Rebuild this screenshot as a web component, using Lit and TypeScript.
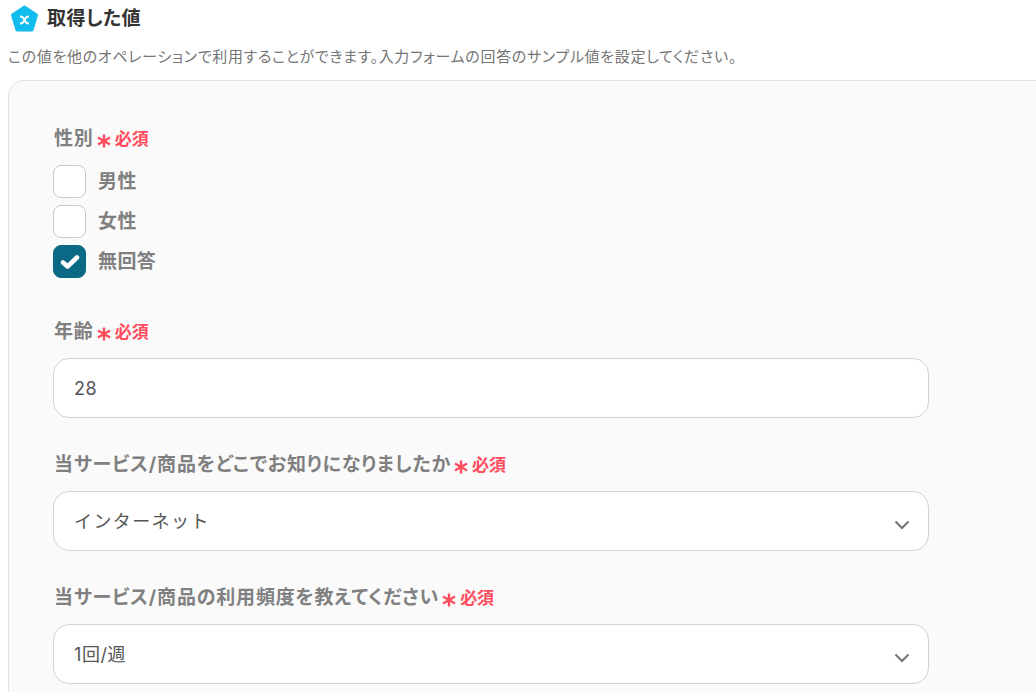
import { LitElement, html, css } from "lit";
import { customElement } from "lit/decorators.js";

const chevron = html`<svg class="chev" width="16" height="10" viewBox="0 0 16 10"><path d="M1.500 1.500 8 8l6.500-6.500" fill="none" stroke="#757575" stroke-width="2"/></svg>`;

@customElement("app-root")
export class AppRoot extends LitElement {
  static styles = css`
    :host {
      display: block;
      width: 1036px;
      height: 692px;
      overflow: hidden;
      background: #fff;
      font-family: Inter, "Noto Sans CJK JP", sans-serif;
      font-feature-settings: "palt";
      box-sizing: border-box;
      padding: 3px 0 0 8px;
    }
    .head { display: flex; align-items: center; gap: 8px; height: 30px; padding-left: 2px; }
    .logo { display: block; flex: none; }
    h1 { margin: 2px 0 0 1px; font-size: 19px; line-height: 28px; font-weight: 700; color: #333; letter-spacing: 0.4px; }
    .desc { margin: 12px 0 0; font-size: 15px; line-height: 24px; color: #757575; height: 24px; white-space: nowrap; letter-spacing: 0.68px; }
    .panel {
      margin-top: 11px;
      width: 1100px;
      height: 700px;
      box-sizing: border-box;
      background: #fafafa;
      border: 1px solid #dfe2e8;
      border-radius: 16px;
      padding: 44px 0 0 44px;
    }
    .label { display: flex; align-items: center; height: 28px; padding-left: 1px; font-size: 19px; line-height: 28px; font-weight: 700; color: #808080; letter-spacing: 0.82px; white-space: nowrap; }
    .star { display: block; margin: 4px 4px 0 3px; flex: none; }
    .req { font-size: 17px; color: #ff4d5e; font-weight: 700; letter-spacing: 0; }
    .opts { display: flex; flex-direction: column; gap: 7px; margin-top: 12px; }
    .opt { display: flex; align-items: center; gap: 12px; height: 33px; font-size: 19px; line-height: 28px; font-weight: 700; color: #808080; letter-spacing: 0.4px; }
    .box { width: 33px; height: 33px; box-sizing: border-box; border: 1px solid #c9c9c9; border-radius: 8px; background: #fff; display: flex; align-items: center; justify-content: center; }
    .box.on { background: #0a6a85; border-color: #0a6a85; }
    .field {
      margin-top: 12px;
      width: 876px;
      height: 60px;
      box-sizing: border-box;
      background: #fff;
      border: 1px solid #ced2da;
      border-radius: 16px;
      display: flex;
      align-items: center;
      justify-content: space-between;
      padding: 2px 18px 0 20px;
      font-size: 18px;
      line-height: 28px;
      color: #555;
      letter-spacing: 1.4px;
      font-feature-settings: normal;
    }
    .num { letter-spacing: 0.6px; }
    .g1 { margin-top: 40px; }
    .g2 { margin-top: 33px; }
    .chev { display: block; margin-top: 6px; }
  `;

  private label(text: string) {
    return html`<div class="label">${text}
      <svg class="star" width="14" height="14" viewBox="0 0 14 14">
        <path d="M7 0.500v13M1 3.500l12 7M13 3.500l-12 7" fill="none" stroke="#ff4d5e" stroke-width="2.400"/>
      </svg><span class="req">必須</span></div>`;
  }

  private opt(text: string, on = false) {
    return html`<div class="opt"><span class="box ${on ? "on" : ""}">${on
      ? html`<svg width="20" height="16" viewBox="0 0 20 16"><path d="M3 8.500 7.500 12.500 17 3.500" fill="none" stroke="#fff" stroke-width="4.500" stroke-linejoin="round" stroke-linecap="round"/></svg>`
      : ""}</span><span>${text}</span></div>`;
  }

  render() {
    return html`
      <div class="head">
        <svg class="logo" width="28" height="28" viewBox="0 0 28 28">
          <path d="M14.500 3 26.500 11 22 26 7 26 2.500 11Z" fill="#12bcec" stroke="#12bcec" stroke-width="3" stroke-linejoin="round"/>
          <path d="M10 12.500c2.500 0 3 .8 4.500 3.500s2 3.500 4.500 3.500M19 12.500c-2.500 0-3 .8-4.500 3.500s-2 3.500-4.500 3.500" fill="none" stroke="#fff" stroke-width="2"/>
        </svg>
        <h1>取得した値</h1>
      </div>
      <p class="desc">この値を他のオペレーションで利用することができます。入力フォームの回答のサンプル値を設定してください。</p>
      <div class="panel">
        ${this.label("性別")}
        <div class="opts">
          ${this.opt("男性")}
          ${this.opt("女性")}
          ${this.opt("無回答", true)}
        </div>
        <div class="g1">${this.label("年齢")}</div>
        <div class="field"><span class="num">28</span></div>
        <div class="g2">${this.label("当サービス/商品をどこでお知りになりましたか")}</div>
        <div class="field"><span>インターネット</span>${chevron}</div>
        <div class="g2">${this.label("当サービス/商品の利用頻度を教えてください")}</div>
        <div class="field"><span class="num">1回/週</span>${chevron}</div>
      </div>
    `;
  }
}
